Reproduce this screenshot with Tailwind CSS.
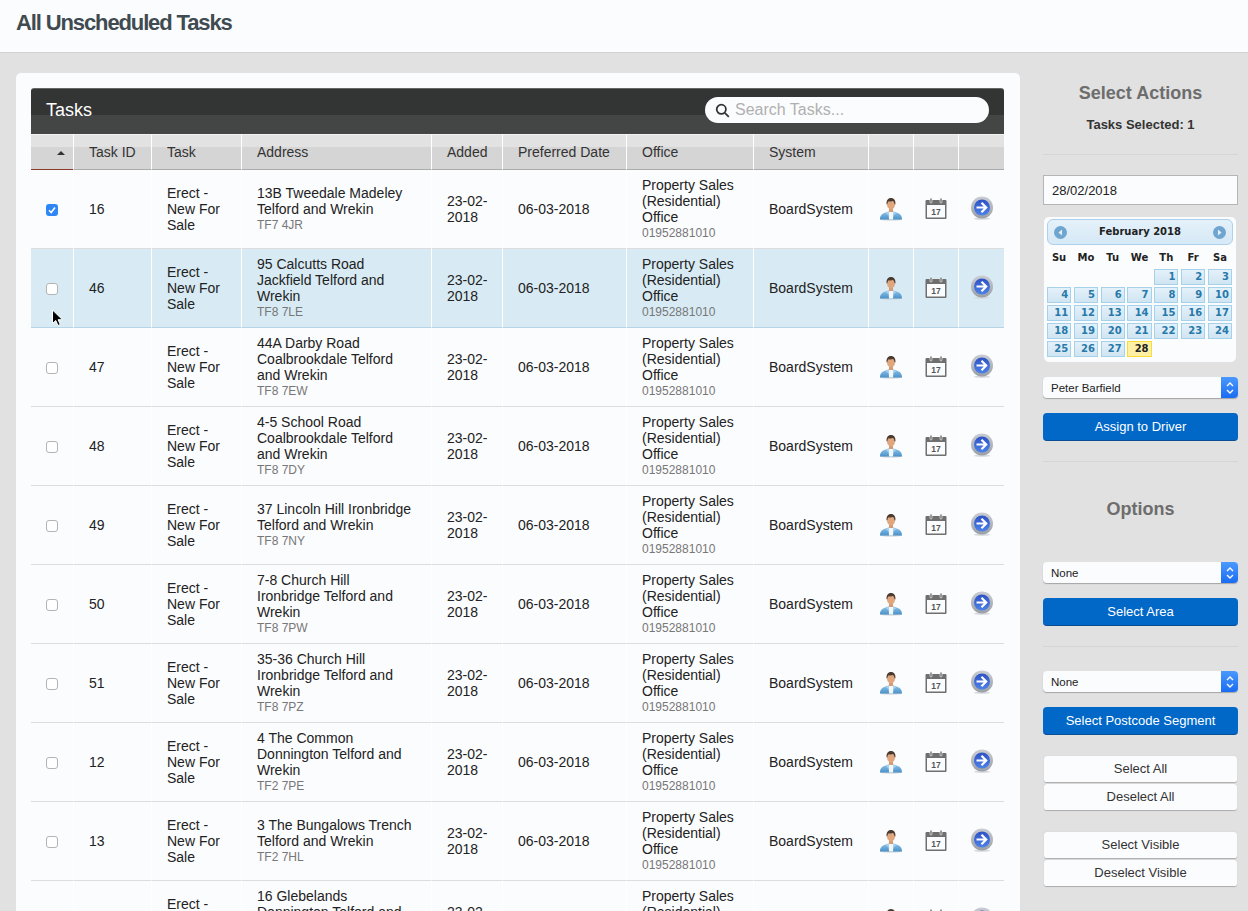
<!DOCTYPE html>
<html>
<head>
<meta charset="utf-8">
<title>All Unscheduled Tasks</title>
<script src="https://cdn.jsdelivr.net/npm/@tailwindcss/browser@4"></script>
</head>
<body class="bg-[#e1e1e1] font-['Liberation_Sans',Arial,sans-serif] text-[14px] leading-4 text-[#222]">
<svg width="0" height="0" class="absolute">
  <defs>
    <linearGradient id="jacket" x1="0" y1="0" x2="0" y2="1"><stop offset="0" stop-color="#8cc4ea"/><stop offset="1" stop-color="#4a90c8"/></linearGradient>
    <linearGradient id="orb" x1="0" y1="0" x2="0" y2="1"><stop offset="0" stop-color="#2f52c4"/><stop offset="1" stop-color="#4d82e8"/></linearGradient>
    <linearGradient id="ring" x1="0" y1="0" x2="0" y2="1"><stop offset="0" stop-color="#c9cdd3"/><stop offset="1" stop-color="#9a9fa6"/></linearGradient>
    <symbol id="i-user" viewBox="0 0 24 24">
      <ellipse cx="12" cy="22.400" rx="11" ry="1.200" fill="#c9ced3"/>
      <path d="M1 22.500c0-4 2-6 5.500-7l3-1h5l3 1c3.500 1 5.500 3 5.500 7z" fill="url(#jacket)"/>
      <path d="M9.500 14.500h5l-.5 8h-4z" fill="#f4f7fa"/>
      <path d="M9.500 14l-2.500 2.500 3 2zM14.500 14l2.500 2.500-3 2z" fill="#a8d2ef"/>
      <rect x="10" y="11" width="4" height="4" fill="#d99a72"/>
      <ellipse cx="12" cy="7.500" rx="4" ry="5" fill="#e0a77f"/>
      <path d="M7.600 7.500c-.5-4 1.400-6.500 4.400-6.500s4.900 2.500 4.400 6.500l-1-.5c0-1.500-.6-2.500-1.400-3-1.500.6-3 .6-4.400.2-.8.7-1.200 1.700-1.200 2.800z" fill="#4a3a30"/>
    </symbol>
    <symbol id="i-cal" viewBox="0 0 22 22">
      <path d="M1.500 3h19a1 1 0 0 1 1 1v17a1 1 0 0 1-1 1h-19a1 1 0 0 1-1-1V4a1 1 0 0 1 1-1z" fill="#6f6f6f"/>
      <rect x="2" y="8" width="18" height="12.500" fill="#fbfcfe"/>
      <rect x="5" y="1" width="2" height="5" rx="1" fill="#6f6f6f" stroke="#fbfcfe" stroke-width=".6"/>
      <rect x="15" y="1" width="2" height="5" rx="1" fill="#6f6f6f" stroke="#fbfcfe" stroke-width=".6"/>
      <text x="11" y="18" text-anchor="middle" font-size="8.500" font-weight="700" fill="#555" font-family="Liberation Sans, sans-serif">17</text>
    </symbol>
    <symbol id="i-go" viewBox="0 0 24 24">
      <ellipse cx="12" cy="22.800" rx="8" ry="1" fill="#d5d8dc"/>
      <circle cx="12" cy="11.500" r="11" fill="url(#ring)"/>
      <circle cx="12" cy="11.500" r="8" fill="url(#orb)"/>
      <path d="M6.500 11.500h9M11.500 6.800l4.700 4.700-4.700 4.700" fill="none" stroke="#fff" stroke-width="2.200"/>
    </symbol>
    <symbol id="i-updown" viewBox="0 0 10 16">
      <path d="M2 6l3-3 3 3M2 10l3 3 3-3" fill="none" stroke="#fff" stroke-width="1.400"/>
    </symbol>
  </defs>
</svg>

<div class="relative h-[911px] w-[1248px] overflow-hidden">
  <header class="h-[53px] border-b border-[#d2d2d2] bg-[#fbfcfe] pl-4 pt-[11px]">
    <h1 class="text-[22px] leading-6 font-bold tracking-[-1.120px] text-[#3f4b50]">All Unscheduled Tasks</h1>
  </header>

  <div class="flex items-start">
    <main class="ml-4 mt-5 w-[1004px] shrink-0 rounded-[5px] bg-[#fbfcfe] px-[15px] pt-[15px]">
      <div class="flex h-[46px] w-[973px] items-center justify-between rounded-t-[3px] border-t border-[#666] bg-[linear-gradient(#333534_0,#333534_26px,#444645_26px,#444645_100%)] pb-[3px] pl-[15px] pr-[15px]">
        <h2 class="text-[18px] leading-5 text-white">Tasks</h2>
        <div class="flex h-[26px] w-[284px] items-center gap-[5px] rounded-full bg-[#fbfcfe] pl-[10px]">
          <svg width="15" height="15" viewBox="0 0 15 15" fill="none" stroke="#333" stroke-width="1.800"><circle cx="6.300" cy="6.300" r="4.600"/><path d="M9.800 9.800l4 4"/></svg>
          <input class="w-[240px] bg-transparent text-[16px] leading-5 outline-none placeholder:text-[#b0b0b0]" placeholder="Search Tasks...">
        </div>
      </div>

      <table class="w-[973px] table-fixed border-separate border-spacing-0">
        <colgroup>
          <col class="w-[42px]"><col class="w-[78px]"><col class="w-[90px]"><col class="w-[190px]"><col class="w-[71px]"><col class="w-[124px]"><col class="w-[127px]"><col class="w-[115px]"><col class="w-[45px]"><col class="w-[45px]"><col class="w-[46px]">
        </colgroup>
        <thead id="head"></thead>
        <tbody id="rows"></tbody>
      </table>
    </main>

    <aside class="ml-[23px] w-[195px] shrink-0 text-center">
      <h3 class="mt-[30px] text-[18px] leading-5 font-bold text-[#6d6d6d]">Select Actions</h3>
      <p class="mt-[14px] text-[13px] leading-4 font-bold text-[#333]">Tasks Selected: 1</p>
      <hr class="mt-[21px] border-[#d5d5d5]">
      <input value="28/02/2018" class="mt-5 box-border h-[30px] w-[195px] border border-[#b5b5b5] bg-[#fbfcfe] pl-2 text-[13px] text-[#222] outline-none">

      <div class="mt-3 ml-px h-[145px] w-[192px] rounded-[5px] bg-[#fbfcfe] px-[3px] pt-[2px] font-['DejaVu_Sans',sans-serif] text-[10px] leading-4 font-bold">
        <div class="flex h-[26px] items-center justify-between rounded-[6px] border border-[#aed0ea] bg-[linear-gradient(#e4f1fa,#d6e9f6)] px-[6px] text-[#222]">
          <svg width="13" height="13" viewBox="0 0 13 13"><circle cx="6.500" cy="6.500" r="6.500" fill="#6fa5cf"/><path d="M8 3.500v6L4.500 6.500z" fill="#e4f1fa"/></svg>
          <span>February 2018</span>
          <svg width="13" height="13" viewBox="0 0 13 13"><circle cx="6.500" cy="6.500" r="6.500" fill="#6fa5cf"/><path d="M5 3.500v6l3.500-3z" fill="#e4f1fa"/></svg>
        </div>
        <div id="cal" class="mt-[4px] grid grid-cols-7 gap-x-[2.700px] gap-y-[2px] pr-px"></div>
      </div>

      <div class="relative mt-[15px] h-[21px] w-[195px] rounded-[4px] bg-[#fbfcfe] text-left text-[11.500px] leading-[22px] text-[#222] shadow-[0_1px_1px_#a5a5a5]">
        <span class="pl-2">Peter Barfield</span>
        <span class="absolute top-0 right-0 flex h-[21px] w-[17px] items-center justify-center rounded-r-[4px] bg-[linear-gradient(#4a99ff,#1a6cf2)]"><svg width="10" height="16"><use href="#i-updown"/></svg></span>
      </div>
      <button class="mt-[15px] block h-7 w-[195px] rounded-[4px] border-b border-[#0a4f94] bg-[#0268c8] text-[13px] text-white">Assign to Driver</button>
      <hr class="mt-5 border-[#d5d5d5]">

      <h3 class="mt-[37px] text-[18px] leading-5 font-bold text-[#6d6d6d]">Options</h3>

      <div class="relative mt-[43px] h-[21px] w-[195px] rounded-[4px] bg-[#fbfcfe] text-left text-[11.500px] leading-[22px] text-[#222] shadow-[0_1px_1px_#a5a5a5]">
        <span class="pl-2">None</span>
        <span class="absolute top-0 right-0 flex h-[21px] w-[17px] items-center justify-center rounded-r-[4px] bg-[linear-gradient(#4a99ff,#1a6cf2)]"><svg width="10" height="16"><use href="#i-updown"/></svg></span>
      </div>
      <button class="mt-[15px] block h-7 w-[195px] rounded-[4px] border-b border-[#0a4f94] bg-[#0268c8] text-[13px] text-white">Select Area</button>
      <hr class="mt-5 border-[#d5d5d5]">

      <div class="relative mt-6 h-[21px] w-[195px] rounded-[4px] bg-[#fbfcfe] text-left text-[11.500px] leading-[22px] text-[#222] shadow-[0_1px_1px_#a5a5a5]">
        <span class="pl-2">None</span>
        <span class="absolute top-0 right-0 flex h-[21px] w-[17px] items-center justify-center rounded-r-[4px] bg-[linear-gradient(#4a99ff,#1a6cf2)]"><svg width="10" height="16"><use href="#i-updown"/></svg></span>
      </div>
      <button class="mt-[15px] block h-7 w-[195px] rounded-[4px] border-b border-[#0a4f94] bg-[#0268c8] text-[13px] text-white">Select Postcode Segment</button>

      <button class="mt-[21px] ml-px block h-[27px] w-[193px] rounded-[3px] border-b border-[#b0b0b0] bg-[#fbfcfe] text-[13px] text-[#333] shadow-[0_0_1px_#bbb]">Select All</button>
      <button class="mt-px ml-px block h-[27px] w-[193px] rounded-[3px] border-b border-[#b0b0b0] bg-[#fbfcfe] text-[13px] text-[#333] shadow-[0_0_1px_#bbb]">Deselect All</button>
      <button class="mt-[21px] ml-px block h-[27px] w-[193px] rounded-[3px] border-b border-[#b0b0b0] bg-[#fbfcfe] text-[13px] text-[#333] shadow-[0_0_1px_#bbb]">Select Visible</button>
      <button class="mt-px ml-px block h-[27px] w-[193px] rounded-[3px] border-b border-[#b0b0b0] bg-[#fbfcfe] text-[13px] text-[#333] shadow-[0_0_1px_#bbb]">Deselect Visible</button>
    </aside>
  </div>

  <svg class="absolute top-[309px] left-[51px]" width="13" height="18" viewBox="0 0 13 18"><path d="M1.500 1v13.500l3.300-3 2.200 5 2.300-1-2.200-4.800h4.400z" fill="#000" stroke="#fff" stroke-width="1"/></svg>
</div>

<script>
const thBase = "h-9 border-t border-b border-t-[#f2f2f2] bg-[linear-gradient(#e2e2e2_0,#e2e2e2_12px,#d5d5d5_12px,#d5d5d5_100%)] text-left font-normal text-[#333]";
const thCell = "h-9 border-t border-b border-l border-t-[#f2f2f2] border-b-[#aaaaaa] border-l-white bg-[linear-gradient(#e2e2e2_0,#e2e2e2_12px,#d5d5d5_12px,#d5d5d5_100%)] pl-[15px] text-left font-normal text-[#333]";
const tdText = "border-b border-l border-b-[#dddddd] border-l-white pl-[15px] pr-[15px] align-middle";
const tdHi = "border-b border-l border-b-[#b5d5e6] border-l-white pl-[15px] pr-[15px] align-middle";
const tdDate = "border-b border-l border-b-[#dddddd] border-l-white pl-[15px] pr-[8px] align-middle";
const tdDateHi = "border-b border-l border-b-[#b5d5e6] border-l-white pl-[15px] pr-[8px] align-middle";
const tdIcon = "border-b border-l border-b-[#dddddd] border-l-white text-center align-middle";
const tdIconHi = "border-b border-l border-b-[#b5d5e6] border-l-white text-center align-middle";
const tdFirst = "border-b border-b-[#dddddd] pl-[15px] align-middle";
const tdFirstHi = "border-b border-b-[#b5d5e6] pl-[15px] align-middle";

document.getElementById("head").innerHTML = `<tr>
  <th class="${thBase} border-b-[#8c3b2b] pr-[8px] text-right"><span class="inline-block h-0 w-0 border-x-[4px] border-b-[4px] border-x-transparent border-b-[#333] align-[2px]"></span></th>` +
  ["Task ID","Task","Address","Added","Preferred Date","Office","System","","",""].map(t => `<th class="${thCell}">${t}</th>`).join("") + `</tr>`;

const data = [
  ["16",["13B Tweedale Madeley","Telford and Wrekin"],"TF7 4JR"],
  ["46",["95 Calcutts Road","Jackfield Telford and","Wrekin"],"TF8 7LE"],
  ["47",["44A Darby Road","Coalbrookdale Telford","and Wrekin"],"TF8 7EW"],
  ["48",["4-5 School Road","Coalbrookdale Telford","and Wrekin"],"TF8 7DY"],
  ["49",["37 Lincoln Hill Ironbridge","Telford and Wrekin"],"TF8 7NY"],
  ["50",["7-8 Church Hill","Ironbridge Telford and","Wrekin"],"TF8 7PW"],
  ["51",["35-36 Church Hill","Ironbridge Telford and","Wrekin"],"TF8 7PZ"],
  ["12",["4 The Common","Donnington Telford and","Wrekin"],"TF2 7PE"],
  ["13",["3 The Bungalows Trench","Telford and Wrekin"],"TF2 7HL"],
  ["14",["16 Glebelands","Donnington Telford and","Wrekin"],"TF2 7PB"]
];
document.getElementById("rows").innerHTML = data.map((r,i) => {
  const hi = i === 1;
  const t = hi ? tdHi : tdText, ic = hi ? tdIconHi : tdIcon, f = hi ? tdFirstHi : tdFirst, dt = hi ? tdDateHi : tdDate;
  const box = i === 0
    ? `<span class="relative mt-px block size-3 rounded-[3px] bg-[#2f87f5]"><input type="checkbox" checked class="absolute inset-0 appearance-none"><svg class="absolute inset-0" width="12" height="12" viewBox="0 0 12 12"><path d="M3 6.300l2.200 2.200L9 3.600" fill="none" stroke="#fff" stroke-width="1.600"/></svg></span>`
    : `<span class="relative mt-px block size-3 rounded-[3px] border border-[#b4b4b4] bg-white"><input type="checkbox" class="absolute inset-0 appearance-none"></span>`;
  return `<tr class="h-[79px] ${hi ? "bg-[#d8ebf4]" : ""}">
    <td class="${f}">${box}</td>
    <td class="${t}">${r[0]}</td>
    <td class="${t}">Erect - New For Sale</td>
    <td class="${t}">${r[1].join("<br>")}<div class="text-[12px] text-[#777]">${r[2]}</div></td>
    <td class="${dt}">23-02-2018</td>
    <td class="${t}">06-03-2018</td>
    <td class="${t}">Property Sales (Residential) Office<div class="text-[12px] text-[#777]">01952881010</div></td>
    <td class="${t}">BoardSystem</td>
    <td class="${ic}"><svg class="mx-auto" width="24" height="24"><use href="#i-user"/></svg></td>
    <td class="${ic}"><svg class="mx-auto -mt-[3px]" width="22" height="22"><use href="#i-cal"/></svg></td>
    <td class="${ic}"><svg class="mx-auto -mt-[3px]" width="24" height="24"><use href="#i-go"/></svg></td>
  </tr>`;
}).join("");

const dn = ["Su","Mo","Tu","We","Th","Fr","Sa"].map(d => `<div class="h-[18px] text-center leading-[18px] text-[#222]">${d}</div>`).join("");
let cells = "";
for (let k=0;k<4;k++) cells += `<div class="h-4"></div>`;
for (let d=1;d<=28;d++) {
  cells += d===28
    ? `<div class="h-4 border border-[#f9dd34] bg-[#fff0a5] pr-[2px] text-right leading-[14px] text-[#222]">${d}</div>`
    : `<div class="h-4 border border-[#a6d1ea] bg-[linear-gradient(#e4f1fa,#cfe5f2)] pr-[2px] text-right leading-[14px] text-[#2779aa]">${d}</div>`;
}
document.getElementById("cal").innerHTML = dn + cells;
</script>
</body>
</html>
